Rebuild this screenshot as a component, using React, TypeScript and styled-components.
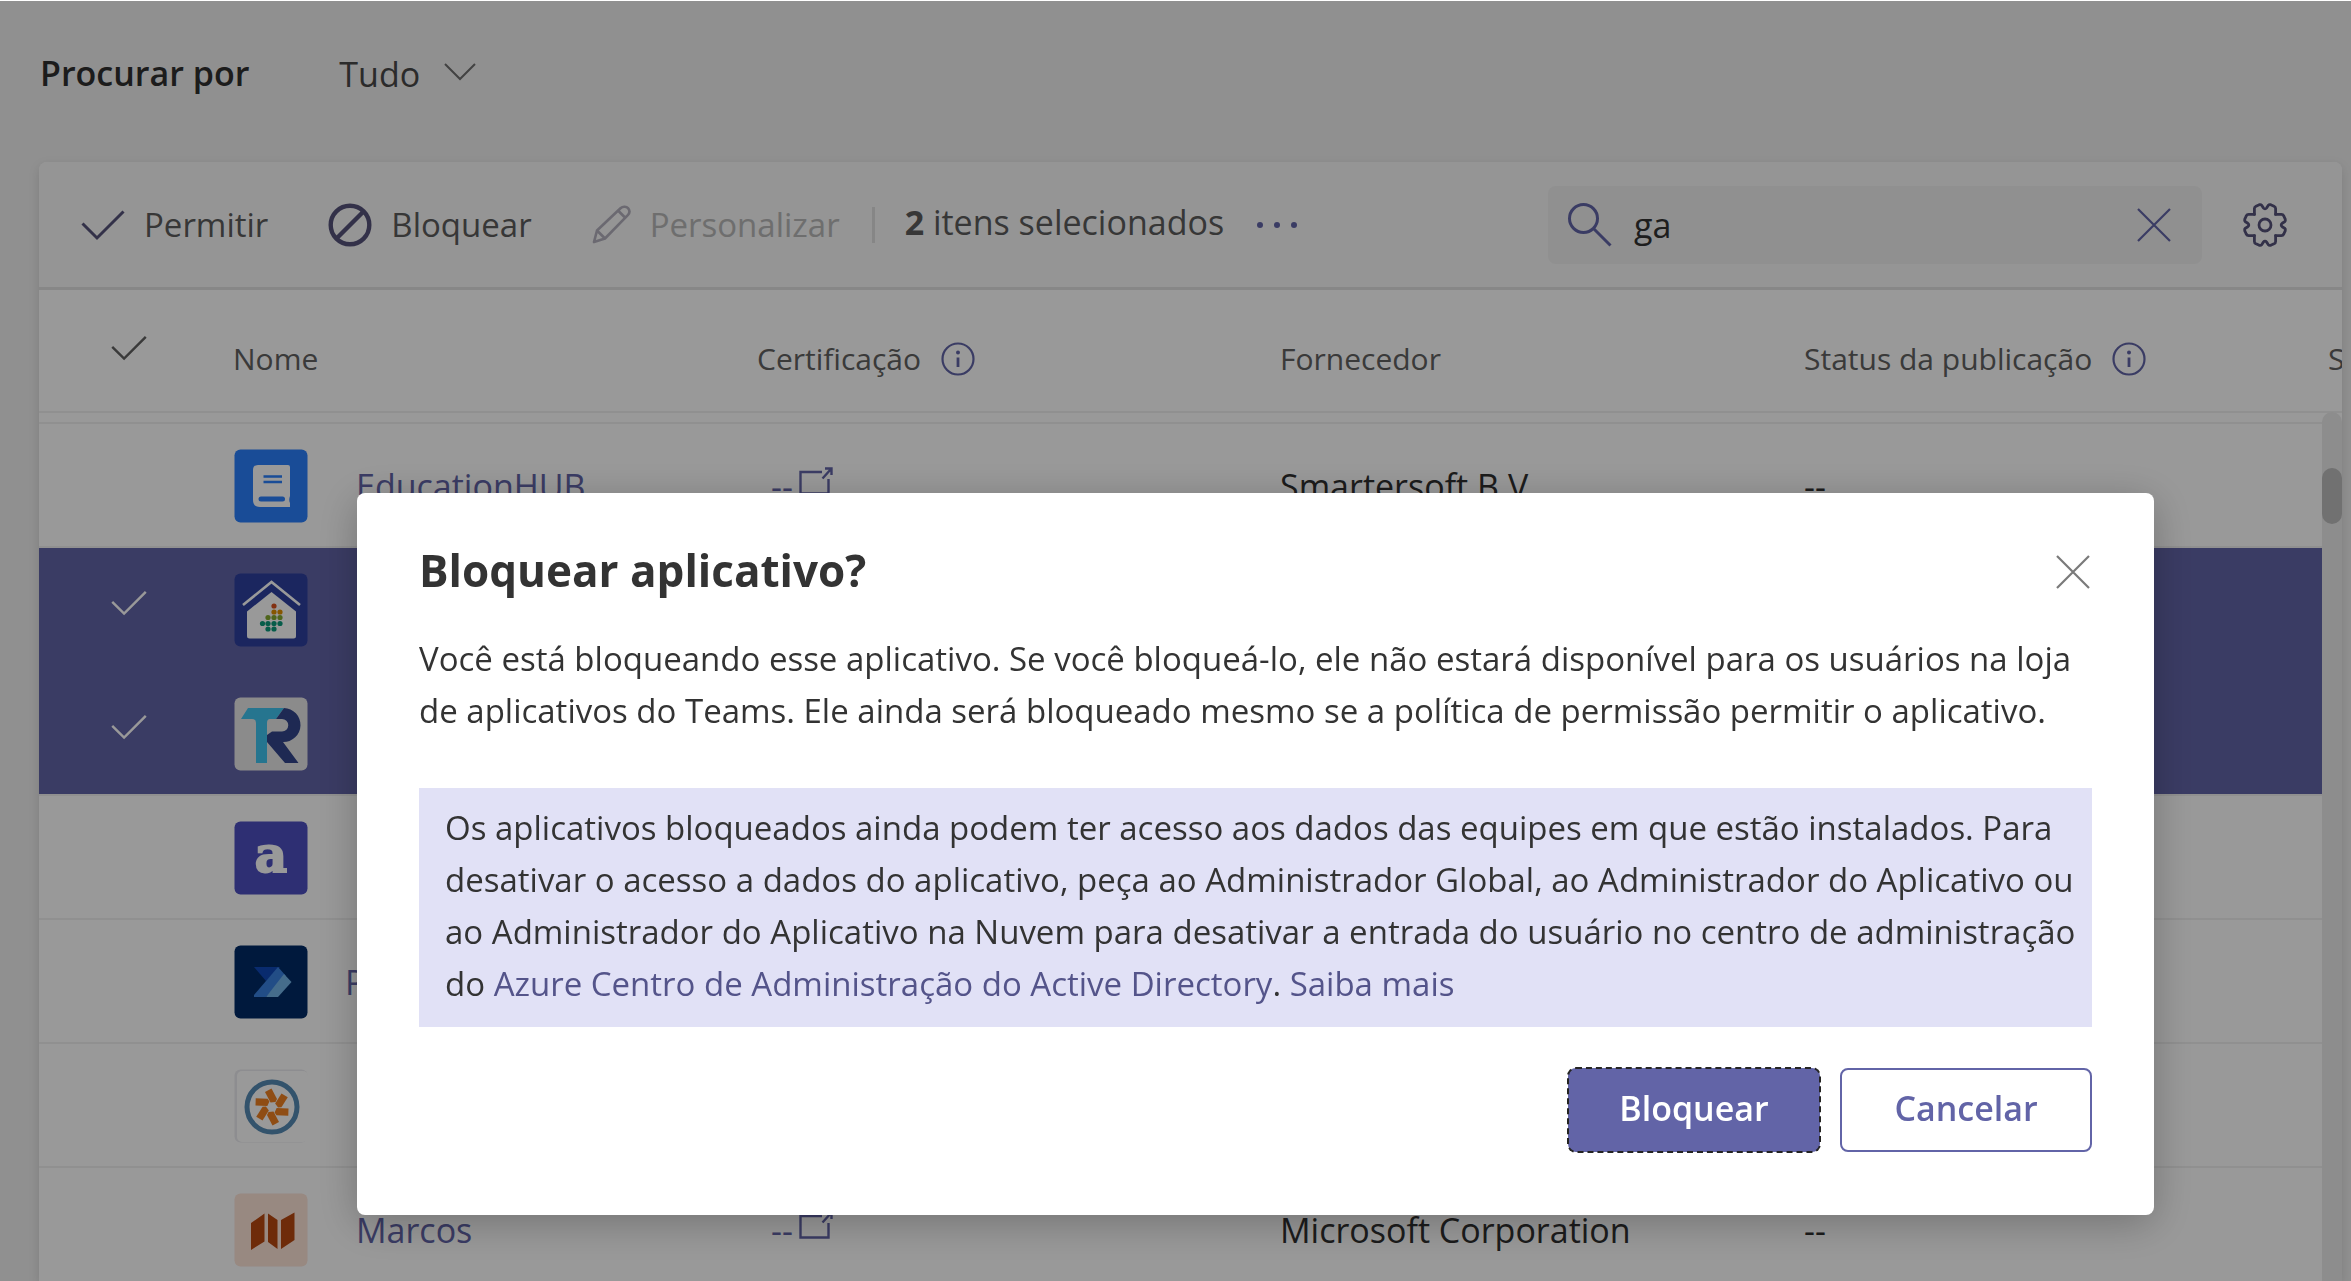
import React from "react";
import styled, { createGlobalStyle } from "styled-components";

const Global = createGlobalStyle`
  * { box-sizing: border-box; }
  body {
    margin: 0;
    background: #f0f0f0;
    font-family: "Open Sans", "Noto Sans", sans-serif;
    font-size: 34px;
    line-height: 52px;
    color: #2f2f2f;
  }
  button, input, select { font: inherit; color: inherit; margin: 0; padding: 0; }
  button { cursor: pointer; }
`;

const Page = styled.div`
  display: flex;
  flex-direction: column;
  height: 100vh;
  overflow: hidden;
  border-top: 1px solid #ffffff;
`;

const FilterBar = styled.div`
  display: flex;
  align-items: center;
  gap: 90px;
  flex: none;
  height: 161px;
  padding: 0 40px 17px;
`;

const FilterLabel = styled.label`
  font-weight: 600;
`;

const SelectBox = styled.div`
  display: grid;
  align-items: center;
  margin-top: 2px;
  color: #484848;
  & > * { grid-area: 1 / 1; }
  svg { justify-self: end; pointer-events: none; color: #6e6e6e; }
`;

const Select = styled.select`
  appearance: none;
  border: 0;
  background: transparent;
  width: 138px;
`;

const Card = styled.section`
  display: flex;
  flex-direction: column;
  flex: 1;
  min-height: 0;
  margin: 0 9px 0 39px;
  border-radius: 8px 8px 0 0;
  background: #ffffff;
  box-shadow: 0 4px 12px rgba(0, 0, 0, 0.12);
  overflow: hidden;
`;

const Toolbar = styled.div`
  display: flex;
  align-items: center;
  flex: none;
  height: 128px;
  padding: 0 54px 0 42px;
  background: #f8f8f8;
  border-bottom: 3px solid #e2e2e2;
`;

const ToolButton = styled.button`
  display: flex;
  align-items: center;
  gap: 19px;
  margin-right: 60px;
  border: 0;
  background: transparent;
  font-size: 33px;
  color: #5c5c5c;
  svg { color: #56537a; }
  &:disabled { color: #b7b7b7; cursor: default; margin-right: 32px; }
  &:disabled svg { color: #b2b0bc; }
`;

const Divider = styled.span`
  width: 3px;
  height: 36px;
  background: #e0e0e0;
`;

const Selected = styled.span`
  margin: 0 32px 6px 30px;
  color: #5c5c5c;
  b { font-weight: 700; }
`;

const IconButton = styled.button<{ $color: string }>`
  display: flex;
  border: 0;
  background: transparent;
  color: ${(p) => p.$color};
`;

const Search = styled.div`
  display: flex;
  align-items: center;
  gap: 22px;
  width: 654px;
  height: 78px;
  margin: 0 40px 0 auto;
  padding: 0 31px 0 20px;
  border-radius: 8px;
  background: #f0f0f0;
  color: #6264a7;
`;

const SearchInput = styled.input`
  flex: 1;
  min-width: 0;
  border: 0;
  outline: 0;
  background: transparent;
  color: #333333;
`;

const TableArea = styled.div`
  position: relative;
  flex: 1;
  min-height: 0;
  overflow: hidden;
`;

const Table = styled.table`
  table-layout: fixed;
  width: 2812px;
  border-collapse: separate;
  border-spacing: 0;
  text-align: left;
`;

const HeadCell = styled.th`
  height: 123px;
  padding: 16px 0 0;
  border-bottom: 2px solid #f0f0f0;
  font-size: 30px;
  font-weight: 400;
  color: #616161;
  vertical-align: middle;
`;

const HeadCheckCell = styled(HeadCell)`
  padding-top: 8px;
`;

const HeadContent = styled.span`
  display: flex;
  align-items: center;
  gap: 20px;
  svg { color: #6264a7; }
`;

const Cell = styled.td`
  height: 124px;
  padding: 2px 0 0;
  border-bottom: 2px solid #f0f0f0;
  vertical-align: middle;
`;

const Row = styled.tr<{ $selected?: boolean; $joined?: boolean }>`
  ${(p) => p.$selected && "& > td { background: #6264a7; background-clip: padding-box; color: #ffffff; }"}
  ${(p) => p.$joined && "& > td { border-color: #6264a7; }"}
`;

const PartialRow = styled.tr`
  & > td { height: 11px; }
`;

const CheckLabel = styled.label<{ $visible: boolean }>`
  display: flex;
  padding: 0 0 14px 72px;
  svg { visibility: ${(p) => (p.$visible ? "visible" : "hidden")}; }
`;

const HiddenCheck = styled.input`
  appearance: none;
  width: 0;
  height: 0;
  margin: 0;
`;

const NameBox = styled.div<{ $gap: number }>`
  display: flex;
  align-items: center;
  gap: ${(p) => p.$gap}px;
  padding-left: 1px;
`;

const Link = styled.a`
  color: #6264a7;
  text-decoration: none;
`;

const CertLink = styled(Link)`
  display: flex;
  align-items: center;
  gap: 5px;
  padding-left: 14px;
  svg { margin-bottom: 10px; }
`;

const Rail = styled.div`
  position: absolute;
  top: 122px;
  right: 0;
  bottom: 0;
  width: 20px;
  padding-top: 56px;
  border-radius: 10px 10px 0 0;
  background: #ebebeb;
`;

const Thumb = styled.div`
  height: 56px;
  border-radius: 10px;
  background: #bcbcbc;
`;

const Overlay = styled.div`
  position: fixed;
  inset: 1px 0 0;
  padding: 492px 197px 0 357px;
  background: rgba(0, 0, 0, 0.4);
`;

const Dialog = styled.div`
  padding: 45px 62px 63px;
  border-radius: 8px;
  background: #ffffff;
  box-shadow: 0 8px 40px rgba(0, 0, 0, 0.25);
  font-size: 33px;
  color: #333333;
`;

const DialogHead = styled.div`
  display: flex;
  align-items: flex-end;
  justify-content: space-between;
  padding-right: 2px;
  button { margin-bottom: 13px; }
`;

const Title = styled.h2`
  margin: 0;
  font-size: 44px;
  line-height: 64px;
  font-weight: 700;
`;

const Message = styled.p`
  margin: 31px 0 0;
`;

const Notice = styled.p`
  margin: 51px 0 0;
  padding: 14px 12px 17px 26px;
  background: #e1e1f6;
`;

const NoticeLink = styled.a`
  color: #54548a;
  text-decoration: none;
`;

const Actions = styled.div`
  display: flex;
  justify-content: flex-end;
  gap: 20px;
  margin-top: 41px;
`;

const ActionButton = styled.button<{ $primary?: boolean }>`
  width: 252px;
  height: 84px;
  border-radius: 8px;
  border: 2px solid #6264a7;
  background: ${(p) => (p.$primary ? "#6264a7" : "#ffffff")};
  color: ${(p) => (p.$primary ? "#ffffff" : "#6264a7")};
  outline: ${(p) => (p.$primary ? "2px dashed #252423" : "none")};
  outline-offset: -1px;
  padding-bottom: 4px;
  font-size: 34px;
  font-weight: 600;
`;

const Check = ({ size, stroke = 3 }: { size: number; stroke?: number }) => (
  <svg width={size} height={size} viewBox="0 0 44 44" fill="none" stroke="currentColor" strokeWidth={stroke} aria-hidden="true">
    <path d="M1.5 20.5 L16 35 L42.5 8.5" />
  </svg>
);

const Chevron = () => (
  <svg width="34" height="34" viewBox="0 0 34 34" fill="none" stroke="currentColor" strokeWidth="2" aria-hidden="true">
    <path d="M2 7 L17 22 L32 7" />
  </svg>
);

const Block = () => (
  <svg width="44" height="44" viewBox="0 0 44 44" fill="none" stroke="currentColor" strokeWidth="4.4" aria-hidden="true">
    <circle cx="22" cy="22" r="19.3" />
    <path d="M8.5 35.5 L35.5 8.5" />
  </svg>
);

const Pencil = () => (
  <svg width="39" height="39" viewBox="0 0 39 39" fill="none" stroke="currentColor" strokeWidth="2.6" strokeLinejoin="round" aria-hidden="true">
    <path d="M2 37 L5 25.5 L28.5 3.2 C31 1 34.5 1.5 36 3.2 C37.8 5.2 37.8 8 35.8 10.2 L13 33.5 Z M5 25.5 L13 33.5 M26 5.5 L33.5 13" />
  </svg>
);

const Dots = () => (
  <svg width="42" height="10" viewBox="0 0 42 10" fill="currentColor" aria-hidden="true">
    <circle cx="4" cy="5" r="3" />
    <circle cx="21" cy="5" r="3" />
    <circle cx="38" cy="5" r="3" />
  </svg>
);

const Lens = () => (
  <svg width="44" height="44" viewBox="0 0 44 44" fill="none" stroke="currentColor" strokeWidth="3" aria-hidden="true">
    <circle cx="15.5" cy="15.5" r="14" />
    <path d="M25.5 25.5 L42.5 42.5" />
  </svg>
);

const Cross = () => (
  <svg width="34" height="34" viewBox="0 0 34 34" fill="none" stroke="currentColor" strokeWidth="2.2" aria-hidden="true">
    <path d="M1 1 L33 33 M33 1 L1 33" />
  </svg>
);

const gearSides = [0, 90, 180, 270];

const Gear = () => (
  <svg width="46" height="46" viewBox="0 0 46 46" fill="none" stroke="currentColor" strokeWidth="2.8" strokeLinejoin="round" strokeLinecap="round" aria-hidden="true">
    {gearSides.map((deg) => (
      <path
        key={deg}
        d="M12.4 12.4 V6.6 Q12.4 5 14 4.2 L17.300 2.700 Q18.800 2.200 19.800 3.400 L21.300 5.800 Q23 7.800 24.700 5.800 L26.200 3.400 Q27.200 2.200 28.700 2.700 L32 4.200 Q33.600 5 33.600 6.600 V12.400"
        transform={`rotate(${deg} 23 23)`}
      />
    ))}
    <circle cx="23" cy="23" r="6" />
  </svg>
);

const Info = () => (
  <svg width="34" height="34" viewBox="0 0 34 34" aria-hidden="true">
    <circle cx="17" cy="17" r="15.5" fill="none" stroke="currentColor" strokeWidth="2.2" />
    <circle cx="17" cy="10.5" r="2" fill="currentColor" />
    <path d="M17 15.5 V25" stroke="currentColor" strokeWidth="2.8" />
  </svg>
);

const External = () => (
  <svg width="36" height="32" viewBox="0 0 36 32" fill="none" stroke="currentColor" strokeWidth="2.4" aria-hidden="true">
    <path d="M24 7 H2.5 V28.5 H30.5 V14 M24.5 13.5 L33 4 M27 3.5 H33.5 V10" />
  </svg>
);

const Tile = ({ fill, children }: { fill: string; children: React.ReactNode }) => (
  <svg width="74" height="74" viewBox="0 0 74 74" aria-hidden="true">
    <rect x="0.5" y="0.5" width="73" height="73" rx="6" fill={fill} />
    {children}
  </svg>
);

const BookTile = () => (
  <Tile fill="#2a7ffc">
    <path d="M24 16 H54 Q56 16 56 18 V47 Q54.5 51 56 54 V58 H26 Q19 58 19 51 V21 Q19 16 24 16 Z" fill="#ffffff" />
    <path d="M29.5 27.5 H48 M29.5 33 H48" stroke="#2a7ffc" strokeWidth="2.6" />
    <path d="M27 50 H48.5" stroke="#2a7ffc" strokeWidth="5" strokeLinecap="round" />
  </Tile>
);

const dots: [number, number, string][] = [
  [40, 33, "#d9501e"],
  [40, 39, "#e09000"], [46, 39, "#e09000"],
  [34, 44.5, "#84a830"], [40, 44.5, "#84a830"], [46, 44.5, "#84a830"],
  [28.5, 50.5, "#0a9a7c"], [34, 50.5, "#0a9a7c"], [40, 50.5, "#0a9a7c"], [46, 50.5, "#0a9a7c"],
  [34, 56, "#0a9a7c"], [40, 56, "#0a9a7c"],
];

const HouseTile = () => (
  <Tile fill="#2d409f">
    <path d="M9 32 L37.5 9 L66 32" fill="none" stroke="#ffffff" strokeWidth="2.6" />
    <path d="M37.5 19 L62 38.5 V63 Q62 65.5 59.5 65.5 H15.5 Q13 65.5 13 63 V38.5 Z" fill="#ffffff" />
    {dots.map(([x, y, c]) => (
      <circle key={`${x}-${y}`} cx={x} cy={y} r="2.6" fill={c} />
    ))}
  </Tile>
);

const TrTile = () => (
  <Tile fill="#e8e8e8">
    <path d="M14 11 H50 L42 22 H36 Q33 22 33 26 V66 H22 V26 Q22 22 18 22 H7 Z" fill="#40c4ee" />
    <path d="M50 11 A17 17 0 0 1 49 45 L64.5 66 H51 L33 45 V38 L38 34.5 H48 A6 6 0 0 0 48 22 H42 Z" fill="#32458b" />
  </Tile>
);

const LetterA = styled.text`
  font-family: "DejaVu Serif", serif;
  font-weight: 700;
  font-size: 50px;
  fill: #ffffff;
  stroke: #ffffff;
  stroke-width: 2px;
`;

const LetterTile = () => (
  <Tile fill="#4d4fc0">
    <LetterA x="37" y="51" textAnchor="middle">a</LetterA>
  </Tile>
);

const FlowTile = () => (
  <Tile fill="#002b66">
    <path d="M20 22 H46 L32 36 Z" fill="#1048b8" />
    <path d="M44 22 L52 31 L32 52 H20 V50 Z" fill="#3a80e0" />
    <path d="M50 29 L57.5 37 L44 52 H32 Z" fill="#74b4e8" />
  </Tile>
);

const blades = [0, 60, 120, 180, 240, 300];

const WheelTile = () => (
  <Tile fill="#ececf0">
    <rect x="3" y="2" width="71" height="71" rx="5" fill="#ffffff" />
    <circle cx="38" cy="38" r="25" fill="none" stroke="#558ab4" strokeWidth="5" />
    {blades.map((a) => (
      <path key={a} d="M31 23 L37.5 19.5 L43 30 L41.5 33 L36.5 33.5 Z" fill="#ee8122" transform={`rotate(${a} 38 38)`} />
    ))}
  </Tile>
);

const MapTile = () => (
  <Tile fill="#fde4d8">
    <path d="M17 30 L30.5 20.5 V48.5 L17 57 Z M34 20.5 L43.5 27 V56 L34 49 Z M47 27 L60.5 19.5 V47 L47 56 Z" fill="#b84810" />
  </Tile>
);

type AppEntry = {
  id: string;
  tile: React.ReactNode;
  name?: string;
  gap?: number;
  cert?: string;
  vendor?: string;
  status?: string;
  selected?: boolean;
};

const apps: AppEntry[] = [
  { id: "book", tile: <BookTile />, name: "EducationHUB", cert: "--", vendor: "Smartersoft B.V.", status: "--" },
  { id: "house", tile: <HouseTile />, selected: true },
  { id: "tr", tile: <TrTile />, selected: true },
  { id: "a", tile: <LetterTile /> },
  { id: "flow", tile: <FlowTile />, name: "Power Automate", gap: 37 },
  { id: "wheel", tile: <WheelTile /> },
  { id: "map", tile: <MapTile />, name: "Marcos", cert: "--", vendor: "Microsoft Corporation", status: "--" },
];

export default function App() {
  return (
    <>
      <Global />
      <Page>
        <FilterBar>
          <FilterLabel htmlFor="scope">Procurar por</FilterLabel>
          <SelectBox>
            <Select id="scope" defaultValue="Tudo">
              <option>Tudo</option>
            </Select>
            <Chevron />
          </SelectBox>
        </FilterBar>

        <Card>
          <Toolbar>
            <ToolButton type="button"><Check size={44} />Permitir</ToolButton>
            <ToolButton type="button"><Block />Bloquear</ToolButton>
            <ToolButton type="button" disabled><Pencil />Personalizar</ToolButton>
            <Divider />
            <Selected><b>2</b> itens selecionados</Selected>
            <IconButton type="button" $color="#6264a7" aria-label="Mais"><Dots /></IconButton>
            <Search>
              <Lens />
              <SearchInput type="text" aria-label="Pesquisar" defaultValue="ga" />
              <IconButton type="button" $color="#6264a7" aria-label="Limpar"><Cross /></IconButton>
            </Search>
            <IconButton type="button" $color="#56537a" aria-label="Configurações"><Gear /></IconButton>
          </Toolbar>

          <TableArea>
            <Table>
              <colgroup>
                <col width="194" />
                <col width="524" />
                <col width="523" />
                <col width="524" />
                <col width="524" />
                <col width="523" />
              </colgroup>
              <thead>
                <tr>
                  <HeadCheckCell scope="col">
                    <CheckLabel $visible>
                      <HiddenCheck type="checkbox" aria-label="Selecionar tudo" />
                      <Check size={36} />
                    </CheckLabel>
                  </HeadCheckCell>
                  <HeadCell scope="col">Nome</HeadCell>
                  <HeadCell scope="col"><HeadContent>Certificação <Info /></HeadContent></HeadCell>
                  <HeadCell scope="col">Fornecedor</HeadCell>
                  <HeadCell scope="col"><HeadContent>Status da publicação <Info /></HeadContent></HeadCell>
                  <HeadCell scope="col">S</HeadCell>
                </tr>
              </thead>
              <tbody>
                <PartialRow><Cell colSpan={6} /></PartialRow>
                {apps.map((app, i) => (
                  <Row key={app.id} $selected={app.selected} $joined={app.selected && apps[i + 1]?.selected}>
                    <Cell>
                      <CheckLabel $visible={!!app.selected}>
                        <HiddenCheck type="checkbox" aria-label="Selecionar" defaultChecked={app.selected} />
                        <Check size={36} />
                      </CheckLabel>
                    </Cell>
                    <Cell>
                      <NameBox $gap={app.gap ?? 48}>
                        {app.tile}
                        {app.name && <Link href="#">{app.name}</Link>}
                      </NameBox>
                    </Cell>
                    <Cell>{app.cert && <CertLink href="#">{app.cert}<External /></CertLink>}</Cell>
                    <Cell>{app.vendor}</Cell>
                    <Cell>{app.status}</Cell>
                    <Cell />
                  </Row>
                ))}
              </tbody>
            </Table>
            <Rail><Thumb /></Rail>
          </TableArea>
        </Card>
      </Page>

      <Overlay>
        <Dialog role="dialog" aria-modal="true" aria-labelledby="dialog-title">
          <DialogHead>
            <Title id="dialog-title">Bloquear aplicativo?</Title>
            <IconButton type="button" $color="#7a7a7a" aria-label="Fechar"><Cross /></IconButton>
          </DialogHead>
          <Message>
            Você está bloqueando esse aplicativo. Se você bloqueá-lo, ele não estará disponível para os usuários na loja
            de aplicativos do Teams. Ele ainda será bloqueado mesmo se a política de permissão permitir o aplicativo.
          </Message>
          <Notice>
            Os aplicativos bloqueados ainda podem ter acesso aos dados das equipes em que estão instalados. Para
            desativar o acesso a dados do aplicativo, peça ao Administrador Global, ao Administrador do Aplicativo ou
            ao Administrador do Aplicativo na Nuvem para desativar a entrada do usuário no centro de administração
            do <NoticeLink href="#">Azure Centro de Administração do Active Directory</NoticeLink>.{" "}
            <NoticeLink href="#">Saiba mais</NoticeLink>
          </Notice>
          <Actions>
            <ActionButton type="button" $primary>Bloquear</ActionButton>
            <ActionButton type="button">Cancelar</ActionButton>
          </Actions>
        </Dialog>
      </Overlay>
    </>
  );
}
